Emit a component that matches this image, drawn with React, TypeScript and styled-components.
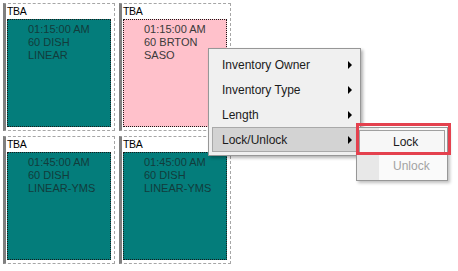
import styled, { createGlobalStyle } from "styled-components"

const GlobalStyle = createGlobalStyle`
  html, body {
    margin: 0;
    padding: 0;
    background: #ffffff;
  }
`

const Page = styled.div`
  position: relative;
  width: 458px;
  height: 271px;
  overflow: hidden;
  background: #ffffff;
`

const Board = styled.div`
  display: grid;
  grid-template-columns: repeat(2, 112px);
  grid-auto-rows: 128px;
  column-gap: 4px;
  row-gap: 5px;
  padding: 3px 0 0 3px;
`

const Slot = styled.div`
  display: flex;
  flex-direction: column;
  box-sizing: border-box;
  border: 1px dashed #a6a6a6;
  border-left: 3px solid #7f7f7f;
`

const SlotLabel = styled.div`
  height: 15px;
  padding-left: 1px;
  font-family: "Liberation Sans", Arial, sans-serif;
  font-size: 10.5px;
  line-height: 14px;
  letter-spacing: -0.3px;
  color: #000000;
`

const Booking = styled.div<{ $tone: "teal" | "pink" }>`
  flex: 1;
  margin: 0 3px 3px 1px;
  padding: 3px 0 0 20px;
  border: 1px dotted #1a1a1a;
  background: ${(p) => (p.$tone === "teal" ? "#047d7b" : "#ffc1cb")};
  color: ${(p) => (p.$tone === "teal" ? "#123c3b" : "#3a3a3a")};
  font-family: "Liberation Sans", Arial, sans-serif;
  font-size: 11px;
  line-height: 13px;
`

const Menu = styled.div`
  position: absolute;
  left: 208px;
  top: 48px;
  width: 153px;
  box-sizing: border-box;
  padding: 3px 3px;
  background: #f0f0f0;
  border: 1px solid #979797;
  box-shadow: 2px 2px 3px rgba(0, 0, 0, 0.3);
  font-family: "Liberation Sans", Arial, sans-serif;
  font-size: 12px;
  color: #1b1b1b;
`

const MenuItem = styled.div<{ $active?: boolean }>`
  display: flex;
  align-items: center;
  justify-content: space-between;
  height: 25px;
  box-sizing: border-box;
  padding: 0 4px 0 9px;
  border: 1px solid ${(p) => (p.$active ? "#a9a9a9" : "transparent")};
  background: ${(p) => (p.$active ? "#d3d3d3" : "transparent")};
`

const Arrow = styled.span`
  width: 0;
  height: 0;
  border-top: 4px solid transparent;
  border-bottom: 4px solid transparent;
  border-left: 4px solid #000000;
`

const SubMenu = styled.div`
  position: absolute;
  left: 356px;
  top: 127px;
  width: 92px;
  box-sizing: border-box;
  padding: 2px;
  border: 1px solid #979797;
  background: linear-gradient(to right, #e8e8e8 0 22px, #fafafa 22px);
  box-shadow: 2px 2px 3px rgba(0, 0, 0, 0.25);
  font-family: "Liberation Sans", Arial, sans-serif;
  font-size: 12px;
`

const SubItem = styled.div<{ $active?: boolean; $disabled?: boolean }>`
  height: 24px;
  box-sizing: border-box;
  display: flex;
  align-items: center;
  padding-left: 33px;
  border: 1px solid ${(p) => (p.$active ? "#a0a0a0" : "transparent")};
  background: ${(p) => (p.$active ? "#f7f7f7" : "transparent")};
  color: ${(p) => (p.$disabled ? "#a3a3a3" : "#1b1b1b")};
`

const Callout = styled.div`
  position: absolute;
  left: 356px;
  top: 123px;
  width: 95px;
  height: 32px;
  box-sizing: border-box;
  border: 3px solid #e4414e;
  pointer-events: none;
`

const slots = [
  { tone: "teal" as const, lines: ["01:15:00 AM", "60 DISH", "LINEAR"] },
  { tone: "pink" as const, lines: ["01:15:00 AM", "60 BRTON", "SASO"] },
  { tone: "teal" as const, lines: ["01:45:00 AM", "60 DISH", "LINEAR-YMS"] },
  { tone: "teal" as const, lines: ["01:45:00 AM", "60 DISH", "LINEAR-YMS"] },
]

const menuItems = ["Inventory Owner", "Inventory Type", "Length", "Lock/Unlock"]

export default function App() {
  return (
    <Page>
      <GlobalStyle />
      <Board>
        {slots.map((s, i) => (
          <Slot key={i}>
            <SlotLabel>TBA</SlotLabel>
            <Booking $tone={s.tone}>
              {s.lines.map((l) => (
                <div key={l}>{l}</div>
              ))}
            </Booking>
          </Slot>
        ))}
      </Board>

      <Menu>
        {menuItems.map((m) => (
          <MenuItem key={m} $active={m === "Lock/Unlock"}>
            <span>{m}</span>
            <Arrow />
          </MenuItem>
        ))}
      </Menu>

      <SubMenu>
        <SubItem $active>Lock</SubItem>
        <SubItem $disabled>Unlock</SubItem>
      </SubMenu>
      <Callout />
    </Page>
  )
}
